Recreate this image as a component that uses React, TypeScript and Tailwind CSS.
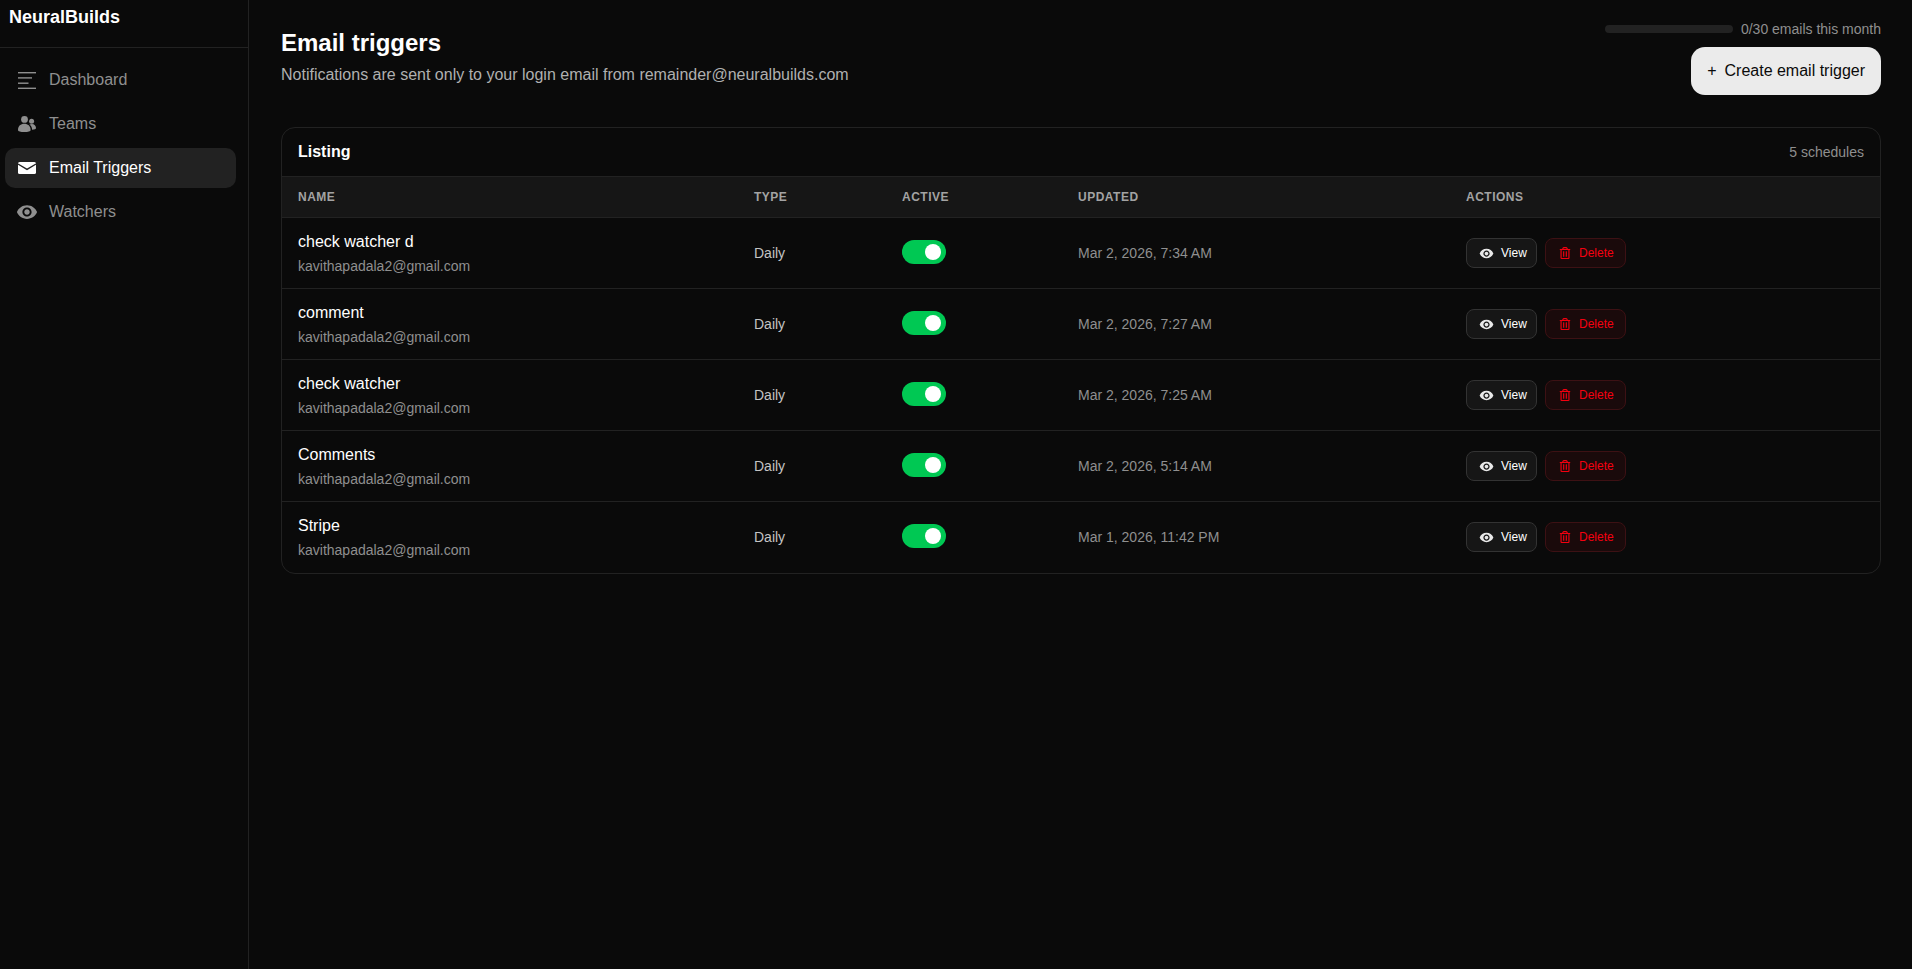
import { FaRegTrashAlt } from 'react-icons/fa';
import { MdVisibility } from 'react-icons/md';

const triggers = [
  { name: 'check watcher d', updated: 'Mar 2, 2026, 7:34 AM' },
  { name: 'comment', updated: 'Mar 2, 2026, 7:27 AM' },
  { name: 'check watcher', updated: 'Mar 2, 2026, 7:25 AM' },
  { name: 'Comments', updated: 'Mar 2, 2026, 5:14 AM' },
  { name: 'Stripe', updated: 'Mar 1, 2026, 11:42 PM' },
];

function LinesIcon() {
  return (
    <svg width="18" height="17" viewBox="0 0 18 17" fill="currentColor">
      <rect x="0" y="0" width="18" height="1.4" />
      <rect x="0" y="5.2" width="14" height="1.4" />
      <rect x="0" y="10.5" width="10.5" height="1.4" />
      <rect x="0" y="15.6" width="18" height="1.4" />
    </svg>
  );
}

function TeamsIcon() {
  return (
    <svg width="18" height="16" viewBox="0 0 18 16" fill="currentColor">
      <circle cx="6.5" cy="3.4" r="3.4" />
      <circle cx="13.6" cy="5.2" r="2.5" />
      <path d="M0 14c0-4 2.8-6.2 6.3-6.2S12.6 10 12.6 14c0 1.4-2.6 2-6.3 2S0 15.4 0 14z" />
      <path d="M11.4 8.6c.8-.5 1.6-.7 2.5-.7 2.5 0 4.1 2 4.1 4.2 0 1-1.3 1.6-3.9 1.6 0-2-.9-3.9-2.7-5.1z" />
    </svg>
  );
}

function MailIcon() {
  return (
    <svg width="18" height="12" viewBox="0 0 18 12">
      <rect width="18" height="12" rx="1.6" fill="currentColor" />
      <path d="M0 2 9 7.4 18 2" fill="none" stroke="#222222" strokeWidth="1.3" />
    </svg>
  );
}

const navItems = [
  { label: 'Dashboard', icon: <LinesIcon /> },
  { label: 'Teams', icon: <TeamsIcon /> },
  { label: 'Email Triggers', icon: <MailIcon />, active: true },
  { label: 'Watchers', icon: <MdVisibility size={22} className="shrink-0" /> },
];

function Sidebar() {
  return (
    <aside className="w-[249px] shrink-0 border-r border-[#222222]">
      <div className="h-[48px] border-b border-[#222222] pl-[9px] pt-[7px] text-lg leading-[20px] font-bold text-white">
        NeuralBuilds
      </div>
      <nav className="flex flex-col gap-1 px-[5px] pt-3">
        {navItems.map((item) => (
          <div
            key={item.label}
            className={
              item.active
                ? 'flex h-10 w-[231px] items-center gap-[13px] rounded-[10px] bg-[#222222] pl-[13px] text-base text-white'
                : 'flex h-10 w-[231px] items-center gap-[13px] rounded-[10px] pl-[13px] text-base text-[#8f8f8f]'
            }
          >
            <span className="flex w-[18px] justify-center">{item.icon}</span>
            {item.label}
          </div>
        ))}
      </nav>
    </aside>
  );
}

function TriggerRow({ name, updated }: { name: string; updated: string }) {
  return (
    <tr className="h-[71px] border-t border-[#222222]">
      <td className="px-4 pt-[2px] align-middle">
        <div className="text-base leading-[20px] text-white">{name}</div>
        <div className="mt-[4px] text-sm leading-[20px] text-[#8f8f8f]">kavithapadala2@gmail.com</div>
      </td>
      <td className="px-4 text-sm text-[#c4c4c4]">Daily</td>
      <td className="px-4">
        <div className="mb-[2px] flex h-6 w-11 items-center justify-end rounded-full bg-[#00c853] pr-[5px]">
          <span className="h-4 w-4 rounded-full bg-white" />
        </div>
      </td>
      <td className="px-4 text-sm text-[#8f8f8f]">{updated}</td>
      <td className="px-4">
        <div className="flex items-center gap-2">
          <button className="flex h-[30px] w-[71px] items-center gap-[7px] rounded-lg border border-[#333333] bg-[#161616] pl-[12px] text-xs text-white">
            <MdVisibility size={15} className="text-[#e8e8e8]" />
            View
          </button>
          <button className="flex h-[30px] w-[81px] items-center gap-[8px] rounded-lg border border-[#3d1114] bg-[#1a0a0b] pl-[13px] text-xs text-[#f5000f]">
            <FaRegTrashAlt size={12} />
            Delete
          </button>
        </div>
      </td>
    </tr>
  );
}

export default function App() {
  return (
    <div className="flex min-h-[969px] bg-[#0a0a0a] font-['Liberation_Sans',Arial,sans-serif]">
      <Sidebar />
      <main className="min-w-0 flex-1 pl-8 pr-[31px]">
        <header className="flex h-[127px] justify-between">
          <div className="pt-[28px]">
            <h1 className="text-2xl leading-[30px] font-bold text-white">Email triggers</h1>
            <p className="mt-[5px] text-base leading-[24px] text-[#b0b0b0]">
              Notifications are sent only to your login email from remainder@neuralbuilds.com
            </p>
          </div>
          <div className="flex flex-col items-end pt-[20px]">
            <div className="flex h-[18px] items-center gap-2">
              <div className="h-2 w-32 rounded-full bg-[#222222]" />
              <span className="text-sm text-[#8f8f8f]">0/30 emails this month</span>
            </div>
            <button className="mt-[9px] flex h-12 items-center gap-2 rounded-[14px] bg-[#ebebeb] px-4 text-base text-[#0a0a0a]">
              <span>+</span>
              Create email trigger
            </button>
          </div>
        </header>
        <section className="overflow-hidden rounded-[14px] border border-[#222222]">
          <div className="flex h-[48px] items-center justify-between px-4">
            <h2 className="text-base font-bold text-white">Listing</h2>
            <span className="text-sm text-[#8f8f8f]">5 schedules</span>
          </div>
          <table className="w-full table-fixed border-collapse">
            <colgroup>
              <col className="w-[456px]" />
              <col className="w-[148px]" />
              <col className="w-[176px]" />
              <col className="w-[388px]" />
              <col />
            </colgroup>
            <thead>
              <tr className="h-[41px] border-t border-[#222222] bg-[#161616] text-left text-xs font-bold tracking-[0.5px] text-[#a3a3a3]">
                <th className="px-4 font-bold">NAME</th>
                <th className="px-4 font-bold">TYPE</th>
                <th className="px-4 font-bold">ACTIVE</th>
                <th className="px-4 font-bold">UPDATED</th>
                <th className="px-4 font-bold">ACTIONS</th>
              </tr>
            </thead>
            <tbody>
              {triggers.map((t) => (
                <TriggerRow key={t.name} name={t.name} updated={t.updated} />
              ))}
            </tbody>
          </table>
        </section>
      </main>
    </div>
  );
}
